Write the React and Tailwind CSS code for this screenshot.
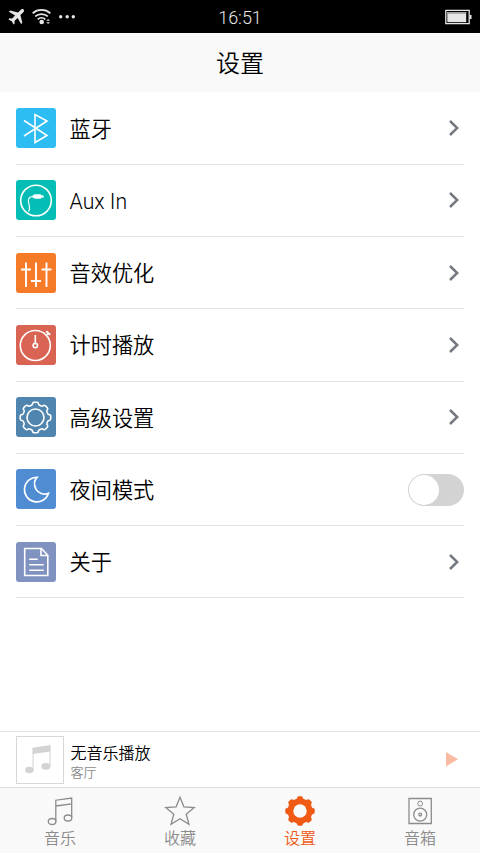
const polar = (radius, deg) => {
    const a = (deg * Math.PI) / 180
    return `${(radius * Math.sin(a)).toFixed(2)} ${(-radius * Math.cos(a)).toFixed(2)}`
}

// Eight-toothed gear outline centred on 0,0
function gearPath(outer, root) {
    let d = ''
    for (let i = 0; i < 8; i++) {
        const c = i * 45
        d += `${i === 0 ? 'M' : 'L'}${polar(root, c - 18)}`
        d += `Q${polar(root + 0.2, c - 13)} ${polar(outer - 0.7, c - 11)}`
        d += `Q${polar(outer + 0.1, c - 9)} ${polar(outer, c - 5)}`
        d += `L${polar(outer, c + 5)}`
        d += `Q${polar(outer + 0.1, c + 9)} ${polar(outer - 0.7, c + 11)}`
        d += `Q${polar(root + 0.2, c + 13)} ${polar(root, c + 18)}`
    }
    return d + 'Z'
}

const BluetoothIcon = () => (
    <path d="M8 12.5 31 27.5 19 34.5V6.5L31 13 8 28" />
)

const AuxIcon = () => (
    <>
        <circle cx="20" cy="20.5" r="15.3" />
        <path d="M12.5 31.5C15.5 28 11.5 23 12.5 19.5c.6-2.6 2-3 4.5-3" strokeWidth="1.2" />
        <path d="M16 16.6c.8-1.8 2.3-2.4 4-2.4h4.8v1h2.8v2.6h-2.8v1H20c-1.7 0-3.2-.5-4-2.2Z" fill="white" stroke="none" />
    </>
)

const EqualizerIcon = () => (
    <path d="M10 9.5v24.5M5 16.5h10M20 9.5v24.5M15 28h10M30.5 9.5v24.5M25.5 16.5h10" strokeWidth="1.9" />
)

const TimerIcon = () => (
    <>
        <circle cx="19.3" cy="20.5" r="15" />
        <circle cx="19.3" cy="20.6" r="2.2" />
        <path d="M19.3 10v8.4" />
        <path d="m30.2 6.2 4 3.6M32.6 8.2l-1.4 1.6" strokeWidth="1.9" />
    </>
)

const GearIcon = () => (
    <g transform="translate(19.5 20.5)">
        <path d={gearPath(15.3, 12.8)} />
        <circle r="8.5" />
    </g>
)

const MoonIcon = () => (
    <path d="M21.2 8.3A12.3 12.3 0 1 0 32.5 24.2 9.6 9.6 0 0 1 19.8 19.8C17.8 15.8 18.3 11.3 21.2 8.3Z" />
)

const DocumentIcon = () => (
    <path d="M8.7 6.5h16.8l6.3 6.8v20.2H8.7ZM25 6.8v6.7h6.5M13.2 17.2h8.5M13.2 22.7h14.5M13.2 28.2h14.5" />
)

const SETTINGS = [
    { id: 'bluetooth', title: '蓝牙', color: 'bg-[#2dbdf3]', icon: BluetoothIcon },
    { id: 'aux', title: 'Aux In', color: 'bg-[#04bdb4]', icon: AuxIcon },
    { id: 'effects', title: '音效优化', color: 'bg-[#f67b28]', icon: EqualizerIcon },
    { id: 'timer', title: '计时播放', color: 'bg-[#da6453]', icon: TimerIcon },
    { id: 'advanced', title: '高级设置', color: 'bg-[#5085af]', icon: GearIcon },
    { id: 'night', title: '夜间模式', color: 'bg-[#508cd2]', icon: MoonIcon, toggle: true },
    { id: 'about', title: '关于', color: 'bg-[#7f92c0]', icon: DocumentIcon },
]

const MusicTabIcon = () => (
    <>
        <path d="M11.8 26.5V5.2L27.7 3v20M11.8 11 27.7 8.8" />
        <ellipse cx="8.1" cy="26.5" rx="3.8" ry="3" />
        <ellipse cx="24" cy="23" rx="3.8" ry="3" />
    </>
)

const StarTabIcon = () => (
    <path d="m16 2.2 3.9 9.6 10.3.7-8 6.7 2.8 10.2-9-5.6-9 5.6 2.8-10.2-8-6.7 10.3-.7Z" />
)

const SettingsTabIcon = () => (
    <g transform="translate(16 16)">
        <path d={gearPath(14.8, 12.5)} fill="currentColor" stroke="none" />
        <circle r="6.7" fill="#f9f9f9" stroke="none" />
    </g>
)

const SpeakerTabIcon = () => (
    <>
        <path d="M5 3.5h22.3v25H5Z" />
        <circle cx="16.2" cy="8.6" r="2.4" strokeWidth="1" />
        <circle cx="16.2" cy="19.6" r="6.5" />
        <circle cx="16.2" cy="19.6" r="1.4" />
    </>
)

const TABS = [
    { id: 'music', title: '音乐', icon: MusicTabIcon },
    { id: 'favorites', title: '收藏', icon: StarTabIcon },
    { id: 'settings', title: '设置', icon: SettingsTabIcon, active: true },
    { id: 'speaker', title: '音箱', icon: SpeakerTabIcon },
]

export default function App() {
    return (
        <div className="flex flex-col w-[480px] h-[853px] overflow-hidden bg-white text-black font-['Roboto','Noto_Sans_CJK_SC',sans-serif]">
            <StatusBar />
            <header className="h-[59px] shrink-0 flex items-center justify-center bg-[#f9f9f9]">
                <h1 className="pt-[3px] text-2xl leading-none font-[350]">设置</h1>
            </header>
            <main className="flex-1 px-4 pt-[0.5px]">
                {SETTINGS.map((item) => (
                    <SettingRow key={item.id} {...item} />
                ))}
            </main>
            <NowPlaying />
            <TabBar />
        </div>
    )
}

function StatusBar() {
    return (
        <div className="h-[33px] shrink-0 grid grid-cols-3 items-center bg-black text-[#e6e6e6]">
            <div className="flex items-center pl-2">
                <svg className="w-4 h-4" viewBox="0 0 16 16" fill="currentColor">
                    <path d="M15.6.5c-.9-.8-2.2-.4-3 .4L10 3.5 2.1 1.6.9 2.8l6.2 3.6-3 3.1-2.5-.3-1.2 1.2 3.3 1.8 1.9 3.4 1.1-1.2-.2-2.5 3.1-3 3.5 6.1 1.2-1.2-1.9-7.8 2.7-2.6c.8-.8 1.3-2 .5-2.9Z" />
                </svg>
                <svg className="w-5 h-4 ml-2" viewBox="0 0 20 16" fill="none" stroke="currentColor" strokeWidth="1.8">
                    <path d="M.7 4.2a13.5 13.5 0 0 1 17.6 0M3.2 7.4a9.6 9.6 0 0 1 12.6 0M5.7 10.4a5.6 5.6 0 0 1 7.6 0" />
                    <circle cx="9.7" cy="13" r="2.3" fill="currentColor" stroke="none" />
                    <path d="m14.3 11.8 1.8-1.8 1.8 1.8ZM14.3 13.3h3.6l-1.8 1.8Z" fill="currentColor" stroke="none" />
                </svg>
                <svg className="w-4 h-4 ml-[7px]" viewBox="0 0 16 16" fill="currentColor">
                    <circle cx="1.7" cy="7.7" r="1.7" />
                    <circle cx="8.2" cy="7.7" r="1.7" />
                    <circle cx="14.3" cy="7.7" r="1.7" />
                </svg>
            </div>
            <span className="pt-[3px] text-center text-[18px] leading-none font-[350]">16:51</span>
            <svg className="w-[27px] h-4 justify-self-end mr-2" viewBox="0 0 27 16">
                <path d="M.8 1.3h23.4v13.4H.8Z" fill="none" stroke="#e6e6e6" strokeWidth="1.3" />
                <path d="M2.3 3h18.9v10.2H2.3Z" fill="#e6e6e6" />
                <path d="M2.3 3h18.9v1.8H2.3Z" fill="#a0a0a0" />
                <path d="M24.8 6h1.7v4h-1.7Z" fill="#e6e6e6" />
            </svg>
        </div>
    )
}

function SettingRow({ title, color, icon, toggle }) {
    const IconComp = icon
    return (
        <div className="h-[72.25px] flex items-center border-b border-[#e2e2e2]">
            <div className={`w-10 h-10 rounded-[3px] ${color}`}>
                <svg className="w-10 h-10" viewBox="0 0 40 40" fill="none" stroke="white" strokeWidth="1.6">
                    <IconComp />
                </svg>
            </div>
            <span className="ml-[13.5px] pt-[2px] flex-1 text-[21.2px] leading-none font-[350]">{title}</span>
            {toggle ? (
                <button className="w-14 h-8 mt-px p-px rounded-full bg-[#d3d3d3]">
                    <span className="block w-[30px] h-[30px] rounded-full bg-white" />
                </button>
            ) : (
                <svg className="w-[10px] h-4 mr-[5px]" viewBox="0 0 10 16" fill="none" stroke="#757a82" strokeWidth="2.5">
                    <path d="m1 1 7.2 7L1 15" />
                </svg>
            )}
        </div>
    )
}

function NowPlaying() {
    return (
        <div className="h-14 shrink-0 flex items-center px-4 border-t border-[#e2e2e2]">
            <div className="w-12 h-12 border border-[#d8d8d8] text-[#d3d3d3]">
                <svg className="w-[46px] h-[46px]" viewBox="0 0 46 46" fill="currentColor">
                    <path d="m15.7 10.7 17.6-2.8v6.5l-17.6 2.5Z" />
                    <path d="M16.1 11v22M33 8.5V30" fill="none" stroke="currentColor" />
                    <ellipse cx="12.3" cy="33" rx="4.2" ry="3.3" />
                    <ellipse cx="28.9" cy="29.4" rx="4.5" ry="3.3" />
                </svg>
            </div>
            <div className="ml-[6.5px] pt-[5px] flex-1 flex flex-col gap-1">
                <span className="text-base leading-none font-[350]">无音乐播放</span>
                <span className="text-[13px] leading-none font-[350] text-[#8c8c8c]">客厅</span>
            </div>
            <svg className="w-3 h-[15px] mr-[6.5px]" viewBox="0 0 12 15" fill="#fabba2">
                <path d="M0 0 12 7.2 0 14.4Z" />
            </svg>
        </div>
    )
}

function TabBar() {
    return (
        <nav className="h-[66px] shrink-0 grid grid-cols-4 border-t border-[#e0e0e0] bg-[#f9f9f9]">
            {TABS.map(({ id, title, icon: IconComp, active }) => (
                <button key={id} className={`flex flex-col items-center pt-[7px] ${active ? 'text-[#f05a14]' : 'text-[#8c8c8c]'}`}>
                    <svg className="w-8 h-8" viewBox="0 0 32 32" fill="none" stroke="currentColor" strokeWidth="1.3">
                        <IconComp />
                    </svg>
                    <span className="mt-1 text-base leading-none font-[350]">{title}</span>
                </button>
            ))}
        </nav>
    )
}
